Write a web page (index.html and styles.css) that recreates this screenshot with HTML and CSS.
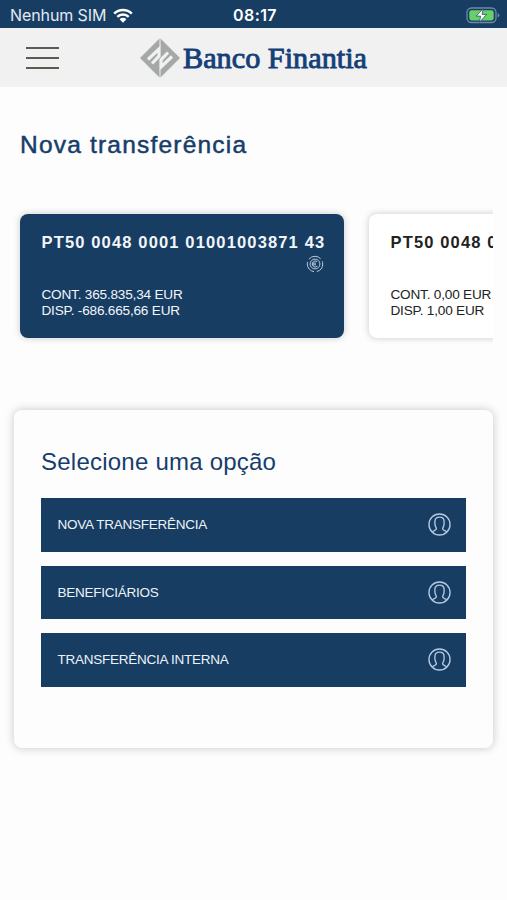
FILE: index.html
```html
<!DOCTYPE html>
<html lang="pt">
<head>
  <meta charset="UTF-8">
  <meta name="viewport" content="width=device-width, initial-scale=1">
  <title>Nova transferência</title>
  <link rel="stylesheet" href="styles.css">
</head>
<body>
  <!-- Shared icons -->
  <svg class="sprite">
    <symbol id="user" viewBox="0 0 24 24">
      <circle cx="12" cy="12" r="11"/>
      <path d="M4.500 19.700c1.200-1.500 4.300-1.300 4.300-3.200 0-1.200-1.600-2.300-1.600-5.200V8.800c0-3 1.800-4.500 4.800-4.500s4.800 1.500 4.800 4.500v2.500c0 2.900-1.600 4-1.600 5.200 0 1.900 3.100 1.700 4.300 3.200"/>
    </symbol>
  </svg>

  <div class="status-bar">
    <div class="carrier">
      <span>Nenhum SIM</span>
      <svg class="wifi" viewBox="0 0 20 15">
        <path d="M1.200 5.600a12.600 12.600 0 0 1 17.600 0M4.300 8.900a8.200 8.200 0 0 1 11.400 0" fill="none" stroke="#fff" stroke-width="2.500"/>
        <path d="M6.600 11.200a4.900 4.900 0 0 1 6.800 0L10 14.700z" fill="#fff"/>
      </svg>
    </div>
    <span class="clock">08:17</span>
    <svg class="battery" viewBox="0 0 34 17">
      <rect x="1" y="1" width="29" height="14.500" rx="4.500" fill="none" stroke="#7189a5" stroke-width="1.300"/>
      <path d="M31.700 6v4.500q1.600-.6 1.600-2.250T31.700 6" fill="#7189a5"/>
      <rect x="3.300" y="3.200" width="24.400" height="10.200" rx="2.300" fill="#65d168"/>
      <path d="M17.200 1.600l-7 7.500h4.500l-1.400 6.200 7.400-7.900h-4.600z" fill="#fff" stroke="#173d63" stroke-width=".7"/>
    </svg>
  </div>

  <header class="header">
    <button class="menu" aria-label="Menu"><span></span><span></span><span></span></button>
    <svg class="logo" viewBox="0 0 230 42">
      <path d="M21 1L41 21 21 41 1 21z" fill="#a5a8a8"/>
      <path d="M21 0v9M21 33v9" stroke="#f1f1f1"/>
      <path d="M9 22.500L20 12v7L13 26.500M33 19.500L22 30v-7L29 15.500" fill="none" stroke="#f1f1f1" stroke-width="3.200"/>
      <text x="44" y="31" textLength="184" lengthAdjust="spacingAndGlyphs">Banco Finantia</text>
    </svg>
  </header>

  <main>
    <h1>Nova transferência</h1>

    <div class="accounts">
      <div class="account selected">
        <div class="iban">PT50 0048 0001 01001003871 43</div>
        <svg class="currency" viewBox="0 0 18 18">
          <circle cx="9" cy="9" r="7.700" stroke-dasharray="13.100 3" stroke-dashoffset="3"/>
          <circle cx="9" cy="9" r="4.900"/>
          <path d="M11.200 6.700a3 3 0 1 0 0 4.600M6.500 8.200h3.500M6.500 9.800h3.500"/>
        </svg>
        <div class="balance">CONT. 365.835,34 EUR<br>DISP. -686.665,66 EUR</div>
      </div>
      <div class="account">
        <div class="iban">PT50 0048 0</div>
        <div class="currency"></div>
        <div class="balance">CONT. 0,00 EUR<br>DISP. 1,00 EUR</div>
      </div>
    </div>

    <section class="options">
      <h2>Selecione uma opção</h2>
      <a class="option">NOVA TRANSFERÊNCIA <svg><use href="#user"/></svg></a>
      <a class="option">BENEFICIÁRIOS <svg><use href="#user"/></svg></a>
      <a class="option">TRANSFERÊNCIA INTERNA <svg><use href="#user"/></svg></a>
    </section>
  </main>
</body>
</html>
```
FILE: styles.css
```css
* {
  box-sizing: border-box;
}

body {
  margin: 0;
  font-family: "Liberation Sans", Arial, sans-serif;
  background-color: #fdfdfd;
  color: #222;
}

.sprite {
  display: none;
}

.status-bar {
  display: grid;
  grid-template-columns: 1fr auto 1fr;
  align-items: center;
  height: 28px;
  padding: 2px 7px 0 10px;
  background-color: #173d63;
  color: #fff;
  font-family: Inter, sans-serif;
  font-size: 16px;
}

.carrier {
  display: flex;
  align-items: center;
  gap: 7px;
  color: #e3eaf2;
}

.carrier span {
  letter-spacing: -0.1px;
}

.wifi {
  width: 20px;
  height: 15px;
}

.clock {
  font-weight: 600;
  letter-spacing: 0.4px;
}

.battery {
  justify-self: end;
  width: 34px;
  height: 17px;
}

.header {
  display: flex;
  align-items: center;
  height: 59px;
  padding-left: 26px;
  background-color: #f1f1f1;
}

.menu {
  display: flex;
  flex-direction: column;
  gap: 8px;
  width: 33px;
  padding: 0;
  border: 0;
  background: none;
}

.menu span {
  height: 2px;
  background-color: #5c5b50;
}

.logo {
  width: 230px;
  height: 42px;
  margin-left: 80px;
}

.logo text {
  fill: #153f78;
  stroke: #153f78;
  stroke-width: 0.9px;
  font-family: "Liberation Serif", serif;
  font-size: 29.5px;
}

main {
  padding: 0 14px 20px;
}

h1 {
  margin: 44px 0 0 6px;
  color: #173d6b;
  font-size: 24.5px;
  font-weight: normal;
  line-height: 28px;
  letter-spacing: 1.2px;
  -webkit-text-stroke: 0.5px #173d6b;
}

/* Horizontal list, the next account is cut at the edge */
.accounts {
  display: flex;
  gap: 25px;
  margin: 43px 0 0 -14px;
  padding: 12px 0 12px 20px;
  overflow: hidden;
}

.account {
  flex: 0 0 324px;
  height: 124px;
  padding: 18px 18px 0 21.5px;
  border-radius: 8px;
  background-color: #fff;
  box-shadow: 0 0 6px 1px rgba(0, 0, 0, 0.16);
}

.account.selected {
  background-color: #173d63;
  color: #f2f5fa;
}

.iban {
  font-size: 16.5px;
  font-weight: bold;
  line-height: 20px;
  letter-spacing: 1.15px;
  white-space: nowrap;
}

.currency {
  display: block;
  width: 18px;
  height: 18px;
  margin: 3px 2px 14px auto;
  fill: none;
  stroke: #b9c9da;
  stroke-width: 1;
}

.balance {
  font-size: 13.6px;
  line-height: 16px;
  letter-spacing: -0.2px;
}

.options {
  height: 338px;
  margin-top: 60px;
  padding: 38px 27px 0;
  border-radius: 8px;
  background-color: #fdfdfd;
  box-shadow: 0 0 8px 1px rgba(0, 0, 0, 0.18);
}

h2 {
  margin: 0 0 22px;
  color: #173d6b;
  font-size: 24px;
  font-weight: normal;
  line-height: 28px;
  letter-spacing: 0.23px;
}

.option {
  display: flex;
  align-items: center;
  justify-content: space-between;
  height: 53.5px;
  margin-bottom: 14px;
  padding: 0 15px 0 16.5px;
  background-color: #173d63;
  color: #edf2f8;
  font-size: 13.5px;
  letter-spacing: -0.25px;
}

.option svg {
  width: 23px;
  height: 23px;
  fill: none;
  stroke: #b4c9e0;
  stroke-width: 1.4;
}
```
